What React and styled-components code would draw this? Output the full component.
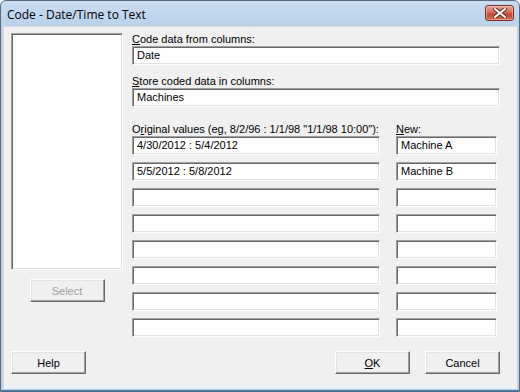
import React from 'react';
import styled, { createGlobalStyle } from 'styled-components';

const GlobalStyle = createGlobalStyle`
  html, body {
    margin: 0;
    padding: 0;
    background: #ffffff;
  }
  body {
    font-family: 'Liberation Sans', Arial, sans-serif;
    font-size: 11px;
    color: #000;
  }
`;

const rows = [
  { from: '4/30/2012 : 5/4/2012', to: 'Machine A' },
  { from: '5/5/2012 : 5/8/2012', to: 'Machine B' },
  { from: '', to: '' },
  { from: '', to: '' },
  { from: '', to: '' },
  { from: '', to: '' },
  { from: '', to: '' },
  { from: '', to: '' },
];

const CloseIcon = () => (
  <svg width='14' height='10' viewBox='0 0 14 10'>
    <path
      d='M2 1 L12 9 M12 1 L2 9'
      stroke='#6b2a22'
      strokeWidth='4'
      strokeLinecap='square'
    />
    <path
      d='M2 1 L12 9 M12 1 L2 9'
      stroke='#ffffff'
      strokeWidth='2'
      strokeLinecap='square'
    />
  </svg>
);

const App = () => {
  return (
    <>
      <GlobalStyle />
      <Window>
        <TitleBar>
          <Title>Code - Date/Time to Text</Title>
          <CloseButton>
            <CloseIcon />
          </CloseButton>
        </TitleBar>
        <Body>
          <Main>
            <LeftColumn>
              <ListBox />
              <Button disabled>Select</Button>
            </LeftColumn>
            <Fields>
              <Label>
                <u>C</u>ode data from columns:
              </Label>
              <Field>Date</Field>
              <Label $top={10}>
                <u>S</u>tore coded data in columns:
              </Label>
              <Field>Machines</Field>
              <ValueGrid>
                <Label>
                  O<u>r</u>iginal values (eg, 8/2/96 : 1/1/98 "1/1/98 10:00"):
                </Label>
                <Label>
                  <u>N</u>ew:
                </Label>
                {rows.map((r, i) => (
                  <React.Fragment key={i}>
                    <Field>{r.from}</Field>
                    <Field>{r.to}</Field>
                  </React.Fragment>
                ))}
              </ValueGrid>
            </Fields>
          </Main>
          <Footer>
            <Button>Help</Button>
            <Button $push>
              <u>O</u>K
            </Button>
            <Button>Cancel</Button>
          </Footer>
        </Body>
      </Window>
    </>
  );
};

const Window = styled.div`
  width: 520px;
  height: 392px;
  box-sizing: border-box;
  display: flex;
  flex-direction: column;
  border: 1px solid #5c6b7c;
  border-radius: 6px 6px 0 0;
  background: linear-gradient(#c9dcf0 0px, #b9d1ea 26px, #b9d1ea 100%);
  padding: 0 2px 2px 2px;
  box-shadow: inset 0 -1px 0 #3f7fb8;
`;

const TitleBar = styled.div`
  height: 25px;
  display: flex;
  align-items: center;
  justify-content: space-between;
  padding: 0 3px 0 4px;
`;

const Title = styled.div`
  font-family: 'Open Sans', 'Liberation Sans', sans-serif;
  font-size: 12px;
  color: #000;
  margin-top: 1px;
`;

const CloseButton = styled.div`
  width: 27px;
  height: 14px;
  margin-top: -2px;
  display: flex;
  align-items: center;
  justify-content: center;
  border: 1px solid #7a2e26;
  border-radius: 3px;
  background: linear-gradient(#e6a392 0%, #d2705c 45%, #c24a34 55%, #cf6a4f 100%);
  box-shadow: inset 0 0 0 1px rgba(255, 255, 255, 0.35);
`;

const Body = styled.div`
  flex: 1;
  display: flex;
  flex-direction: column;
  background: #f0f0f0;
  padding: 7px 17px 15px 8px;
  box-shadow: inset 1px 1px 0 #dcdcdc;
`;

const Main = styled.div`
  display: flex;
  gap: 9px;
`;

const LeftColumn = styled.div`
  width: 112px;
  display: flex;
  flex-direction: column;
  align-items: center;
  gap: 9px;
`;

const sunken = `
  box-sizing: border-box;
  background: #ffffff;
  border-style: solid;
  border-width: 1px;
  border-color: #a0a0a0 #ffffff #ffffff #a0a0a0;
  box-shadow: inset 1px 1px 0 #696969, inset -1px -1px 0 #e3e3e3;
`;

const ListBox = styled.div`
  ${sunken}
  width: 112px;
  height: 237px;
`;

const Button = styled.button`
  box-sizing: border-box;
  width: 75px;
  height: 23px;
  padding: 0;
  margin-left: ${(p) => (p.$push ? 'auto' : '0')};
  font-family: 'Liberation Sans', Arial, sans-serif;
  font-size: 11px;
  color: #000;
  background: #f0f0f0;
  border-style: solid;
  border-width: 1px;
  border-color: #ffffff #696969 #696969 #ffffff;
  box-shadow: inset -1px -1px 0 #a0a0a0, inset 1px 1px 0 #e3e3e3;

  &:disabled {
    color: #a0a0a0;
  }

  u {
    text-decoration: underline;
  }
`;

const Fields = styled.div`
  flex: 1;
  display: flex;
  flex-direction: column;
`;

const Label = styled.div`
  height: 13px;
  line-height: 13px;
  margin-top: ${(p) => p.$top || 0}px;
  white-space: nowrap;
`;

const Field = styled.div`
  ${sunken}
  height: 19px;
  line-height: 17px;
  padding: 0 4px;
  white-space: nowrap;
`;

const ValueGrid = styled.div`
  display: grid;
  grid-template-columns: 248px 101px;
  column-gap: 16px;
  row-gap: 7px;
  margin-top: 16px;

  & > ${Label} {
    margin-bottom: -7px;
  }
`;

const Footer = styled.div`
  margin-top: auto;
  display: flex;
  gap: 15px;
`;

export default App;
